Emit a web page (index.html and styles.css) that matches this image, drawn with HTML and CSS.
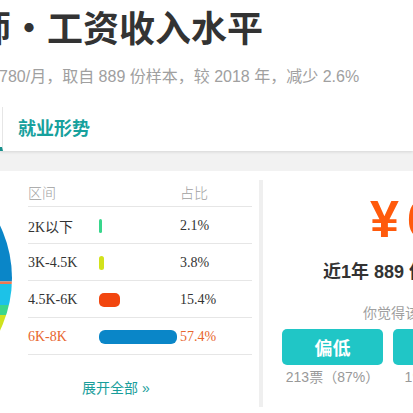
FILE: index.html
```html
<!DOCTYPE html>
<html lang="zh-CN">
<head>
    <meta charset="UTF-8">
    <title>工资收入水平</title>
    <link rel="stylesheet" href="styles.css">
</head>
<body>
<header class="head">
    <h1 class="title">师<span class="dot">·</span>工资收入水平</h1>
    <p class="summary">780/月，取自 889 份样本，较 2018 年，减少 2.6%</p>
    <nav class="tabs">
        <span class="tab-edge"></span>
        <a class="tab" href="#">就业形势</a>
    </nav>
</header>
<main class="main">
    <section class="salary">
        <div class="dist">
            <svg class="pie" width="28" height="236" viewBox="0 0 28 236">
                <defs>
                    <clipPath id="pie-clip">
                        <circle cx="-109" cy="107" r="121"/>
                    </clipPath>
                </defs>
                <g clip-path="url(#pie-clip)">
                    <rect x="0" y="0" width="28" height="110.5" fill="#0a86c8"/>
                    <rect x="0" y="110.5" width="28" height="2.5" fill="#f07850"/>
                    <rect x="0" y="113" width="28" height="21" fill="#1cc2e8"/>
                    <rect x="0" y="134" width="28" height="10" fill="#3ad68c"/>
                    <rect x="0" y="144" width="28" height="40" fill="#cfe21e"/>
                </g>
            </svg>
            <div class="dist-table">
                <div class="row row-head">
                    <span class="c-range">区间</span>
                    <span class="c-bar"></span>
                    <span class="c-pct">占比</span>
                </div>
                <div class="row">
                    <span class="c-range">2K以下</span>
                    <span class="c-bar"><i class="bar bar-green" style="width: 3px"></i></span>
                    <span class="c-pct">2.1%</span>
                </div>
                <div class="row">
                    <span class="c-range">3K-4.5K</span>
                    <span class="c-bar"><i class="bar bar-yellow" style="width: 5px"></i></span>
                    <span class="c-pct">3.8%</span>
                </div>
                <div class="row">
                    <span class="c-range">4.5K-6K</span>
                    <span class="c-bar"><i class="bar bar-red" style="width: 21px"></i></span>
                    <span class="c-pct">15.4%</span>
                </div>
                <div class="row row-hot">
                    <span class="c-range">6K-8K</span>
                    <span class="c-bar"><i class="bar bar-blue" style="width: 78px"></i></span>
                    <span class="c-pct">57.4%</span>
                </div>
                <a class="more" href="#">展开全部 »</a>
            </div>
        </div>
        <div class="divider"></div>
        <div class="pay">
            <p class="avg"><span class="yen">¥</span>6780</p>
            <p class="avg-note">近1年 889 份样本平均工资</p>
            <p class="ask">你觉得该工资水平？</p>
            <div class="votes">
                <div class="vote">
                    <button class="vote-btn">偏低</button>
                    <span class="vote-count">213票（87%）</span>
                </div>
                <div class="vote">
                    <button class="vote-btn">合理</button>
                    <span class="vote-count">19票（8%）</span>
                </div>
                <div class="vote">
                    <button class="vote-btn">偏高</button>
                    <span class="vote-count">13票（5%）</span>
                </div>
            </div>
        </div>
    </section>
</main>
</body>
</html>
```

FILE: styles.css
```css
* {
    padding: 0;
    margin: 0;
    box-sizing: border-box;
}
html, body {
    overflow: hidden;
}
body {
    font-family: "Liberation Sans", "Noto Sans CJK SC", sans-serif;
    background-color: #f2f2f2;
    color: #333;
    width: 413px;
    height: 413px;
}
a {
    text-decoration: none;
}

/* top block */
.head {
    background-color: white;
    box-shadow: 0 1px 3px rgba(0, 0, 0, 0.12);
    position: relative;
}
.title {
    font-family: "Noto Sans CJK SC", sans-serif;
    font-size: 36px;
    font-weight: 700;
    line-height: 44px;
    padding-top: 4px;
    margin-left: -25px;
    white-space: nowrap;
    color: #333;
}
.title .dot {
    display: inline-block;
    width: 1em;
    text-align: center;
}
.summary {
    font-size: 16px;
    line-height: 20px;
    color: #a0a0a0;
    margin-top: 19px;
    margin-left: -1px;
    white-space: nowrap;
}
.tabs {
    display: flex;
    height: 47px;
    margin-top: 17px;
}
.tab-edge {
    width: 3px;
    margin-top: 3px;
    border-right: 1px solid #e6e6e6;
    border-bottom: 4px solid #17908c;
}
.tab {
    font-family: "Noto Sans CJK SC", sans-serif;
    font-size: 18px;
    font-weight: 700;
    line-height: 47px;
    padding-left: 15px;
    color: #17a19d;
}

/* content */
.main {
    padding-top: 20px;
}
.salary {
    display: flex;
    background-color: white;
    height: 260px;
}
.dist {
    display: flex;
    flex-shrink: 0;
    width: 259px;
}
.pie {
    display: block;
    flex-shrink: 0;
}
.dist-table {
    width: 224px;
}
.row {
    display: flex;
    align-items: center;
    height: 37px;
    padding-top: 2px;
    border-bottom: 1px solid #e6e6e6;
    font-family: "Liberation Serif", "Noto Sans CJK SC", serif;
    font-size: 14px;
    color: #333;
}
.row-head {
    height: 36px;
    padding-top: 6px;
    color: #a0a0a0;
    font-family: "Noto Sans CJK SC", sans-serif;
    font-weight: 300;
}
.row-hot {
    color: #e8662e;
}
.c-range {
    width: 71px;
}
.c-bar {
    width: 81px;
    display: flex;
    align-items: center;
}
.bar {
    display: block;
    height: 14px;
    border-radius: 3px;
}
.bar-green {
    background-color: #38d68c;
}
.bar-yellow {
    background-color: #d2e21c;
    border-radius: 3px;
}
.bar-red {
    background-color: #f2460f;
    border-radius: 5px;
}
.bar-blue {
    background-color: #0a86c8;
    border-radius: 6px;
}
.more {
    display: block;
    margin-top: 23px;
    padding-left: 54px;
    font-size: 14px;
    line-height: 20px;
    color: #1a9e9b;
}
.divider {
    flex-shrink: 0;
    width: 4px;
    margin-top: 9px;
    height: 227px;
    background-color: #efefef;
}
.pay {
    flex: 1;
    white-space: nowrap;
}
.avg {
    font-size: 52px;
    font-weight: 700;
    line-height: 52px;
    color: #ff5a0c;
    margin-top: 22px;
    margin-left: 107px;
}
.yen {
    margin-right: 8px;
}
.avg-note {
    font-size: 18px;
    font-weight: 700;
    line-height: 24px;
    margin-top: 15px;
    margin-left: 60px;
}
.ask {
    font-size: 14px;
    line-height: 20px;
    color: #a0a0a0;
    margin-top: 19px;
    margin-left: 100px;
}
.votes {
    display: flex;
    gap: 10px;
    margin-top: 6px;
    margin-left: 19px;
}
.vote {
    width: 101px;
    flex-shrink: 0;
    display: flex;
    flex-direction: column;
    align-items: center;
}
.vote-btn {
    width: 101px;
    height: 36px;
    border: none;
    border-radius: 5px;
    background-color: #20c6c6;
    color: white;
    font-family: "Noto Sans CJK SC", sans-serif;
    font-size: 18px;
    font-weight: 700;
}
.vote-count {
    font-size: 14px;
    line-height: 20px;
    margin-top: 2px;
    color: #999;
}
```
